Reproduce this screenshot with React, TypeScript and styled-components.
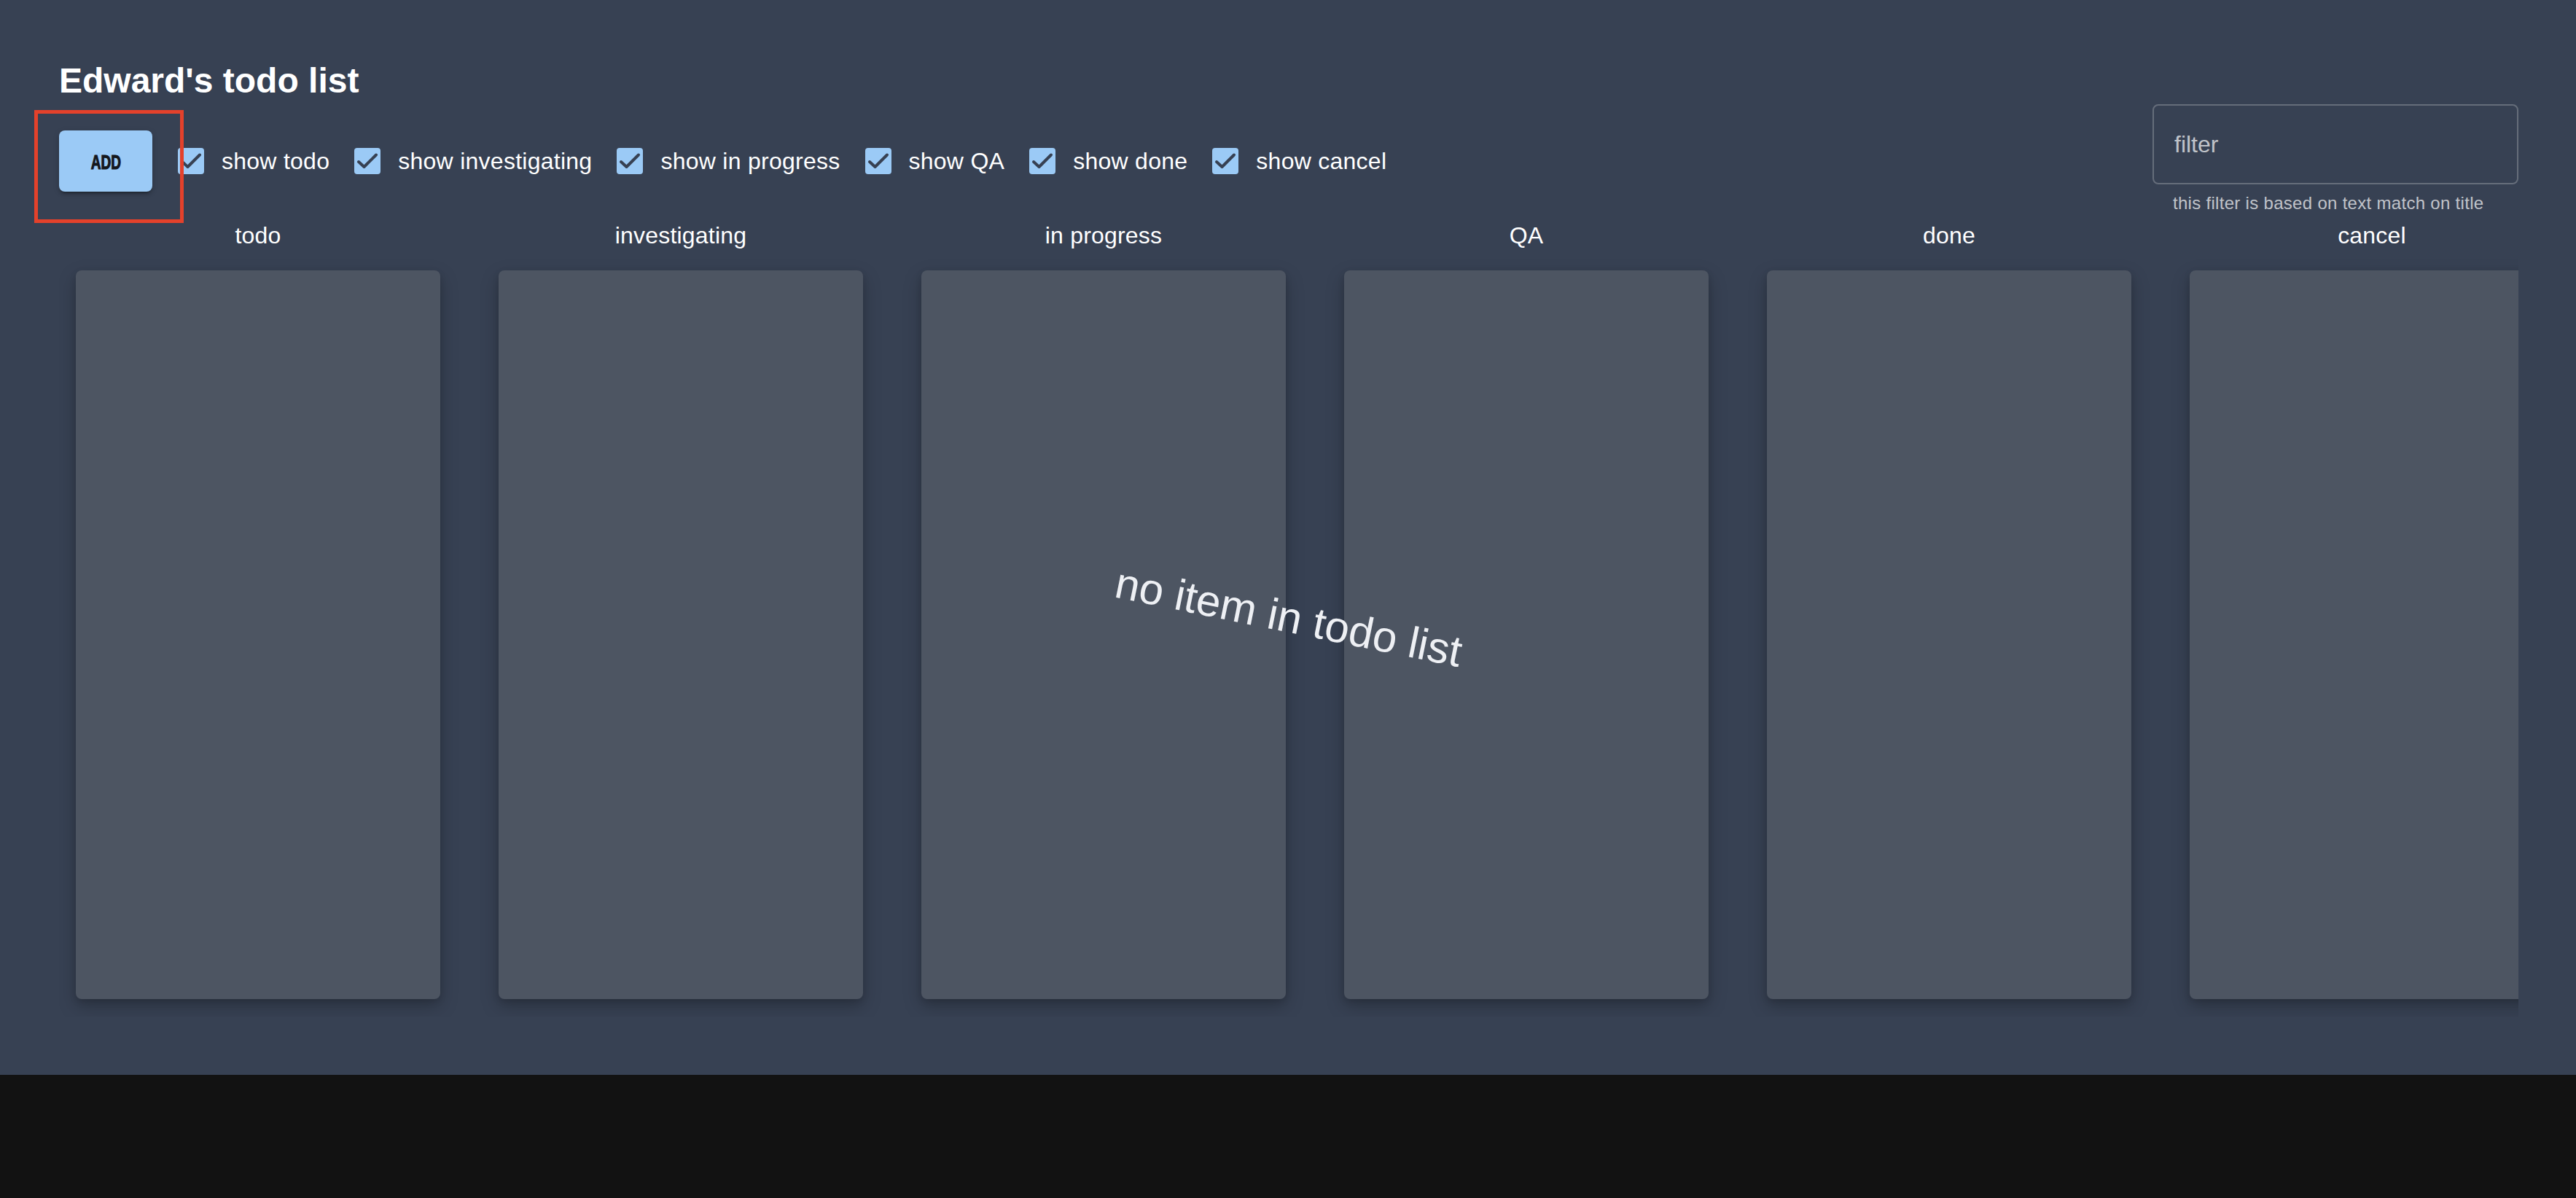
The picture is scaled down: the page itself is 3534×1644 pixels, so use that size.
import React from 'react'
import styled, { createGlobalStyle } from 'styled-components'

const GlobalStyle = createGlobalStyle`
body {
    margin: 0;
    background-color: #121212;
    font-family: "Liberation Sans", Arial, sans-serif;
}
`

const Page = styled.div`
position: relative;
background-color: #374153;
padding: 82px 79px 80px 81px;
color: #ffffff;
`

const Header = styled.div`
display: flex;
justify-content: space-between;
align-items: flex-start;
`

const LeftCol = styled.div`
display: flex;
flex-direction: column;
`

const Title = styled.h1`
margin: 0;
font-size: 48px;
line-height: 58px;
font-weight: 700;
color: #ffffff;
`

const Controls = styled.div`
display: flex;
align-items: center;
height: 84px;
margin-top: 39px;
`

const AddWrap = styled.div`
position: relative;
margin-right: 1px;
`

const AddButton = styled.button`
display: flex;
align-items: center;
justify-content: center;
width: 128px;
height: 84px;
padding: 0;
border: none;
border-radius: 8px;
background-color: #9bcaf6;
color: #14171c;
font-family: "Liberation Sans", Arial, sans-serif;
font-weight: 700;
font-size: 28px;
box-shadow: 0 6px 2px -4px rgba(0,0,0,0.2), 0 4px 4px 0 rgba(0,0,0,0.14), 0 2px 10px 0 rgba(0,0,0,0.12);
cursor: pointer;
`

// the label font in the screenshot is a tall, heavy condensed face
const Condensed = styled.span`
display: inline-block;
transform: scaleX(0.68);
margin-top: 3px;
-webkit-text-stroke: 1.2px #14171c;
`

const Highlight = styled.div`
position: absolute;
left: -34px;
top: -28px;
width: 205px;
height: 155px;
box-sizing: border-box;
border: 5px solid #e4412b;
z-index: 2;
pointer-events: none;
`

const CheckItem = styled.label`
display: flex;
align-items: center;
gap: 24px;
margin-left: 34px;
font-size: 32px;
letter-spacing: 0.26px;
color: #ffffff;
cursor: pointer;
`

const FilterCol = styled.div`
display: flex;
flex-direction: column;
width: 502px;
padding-top: 61px;
`

const FilterInput = styled.input`
box-sizing: border-box;
width: 100%;
height: 110px;
padding: 0 28px;
border: 2px solid rgba(255, 255, 255, 0.23);
border-radius: 8px;
background: transparent;
color: #ffffff;
font-family: "Liberation Sans", Arial, sans-serif;
font-size: 32px;
outline: none;
&::placeholder {
    color: rgba(255, 255, 255, 0.7);
}
`

const Helper = styled.div`
margin: 6px 28px 0;
font-size: 24px;
line-height: 40px;
letter-spacing: 0.3px;
white-space: nowrap;
color: rgba(255, 255, 255, 0.7);
`

const Board = styled.div`
position: relative;
display: flex;
gap: 80px;
padding: 0 0 24px 23px;
overflow: hidden;
`

const Column = styled.div`
flex: 0 0 500px;
display: flex;
flex-direction: column;
`

const ColumnTitle = styled.div`
text-align: center;
font-size: 32px;
line-height: 48px;
letter-spacing: 0.2px;
margin-bottom: 24px;
color: #ffffff;
`

const Card = styled.div`
height: 1000px;
border-radius: 8px;
background-color: #4d5562;
box-shadow: 0 10px 26px rgba(0, 0, 0, 0.22), 0 4px 10px rgba(0, 0, 0, 0.12);
`

const EmptyText = styled.div`
position: absolute;
left: 50%;
top: 50%;
transform: translate(-50%, -50%) rotate(11.5deg);
font-size: 60px;
white-space: nowrap;
color: #eef0f4;
pointer-events: none;
`

const CheckIcon: React.FC = () => (
    <svg width="36" height="36" viewBox="0 0 36 36">
        <rect x="0" y="0" width="36" height="36" rx="4" fill="#9bcaf6" />
        <polyline
            points="6,19 13.5,26 30,9.5"
            fill="none"
            stroke="#374153"
            strokeWidth="4"
            strokeLinecap="round"
            strokeLinejoin="round"
        />
    </svg>
)

const statuses = ['todo', 'investigating', 'in progress', 'QA', 'done', 'cancel']

const App: React.FC = () => {
    return (
        <Page>
            <GlobalStyle />
            <Header>
                <LeftCol>
                    <Title>Edward's todo list</Title>
                    <Controls>
                        <AddWrap>
                            <AddButton>
                                <Condensed>ADD</Condensed>
                            </AddButton>
                            <Highlight />
                        </AddWrap>
                        {statuses.map((s) => (
                            <CheckItem key={s}>
                                <CheckIcon />
                                show {s}
                            </CheckItem>
                        ))}
                    </Controls>
                </LeftCol>
                <FilterCol>
                    <FilterInput placeholder="filter" />
                    <Helper>this filter is based on text match on title</Helper>
                </FilterCol>
            </Header>
            <Board>
                {statuses.map((s) => (
                    <Column key={s}>
                        <ColumnTitle>{s}</ColumnTitle>
                        <Card />
                    </Column>
                ))}
                <EmptyText>no item in todo list</EmptyText>
            </Board>
        </Page>
    )
}

export default App
